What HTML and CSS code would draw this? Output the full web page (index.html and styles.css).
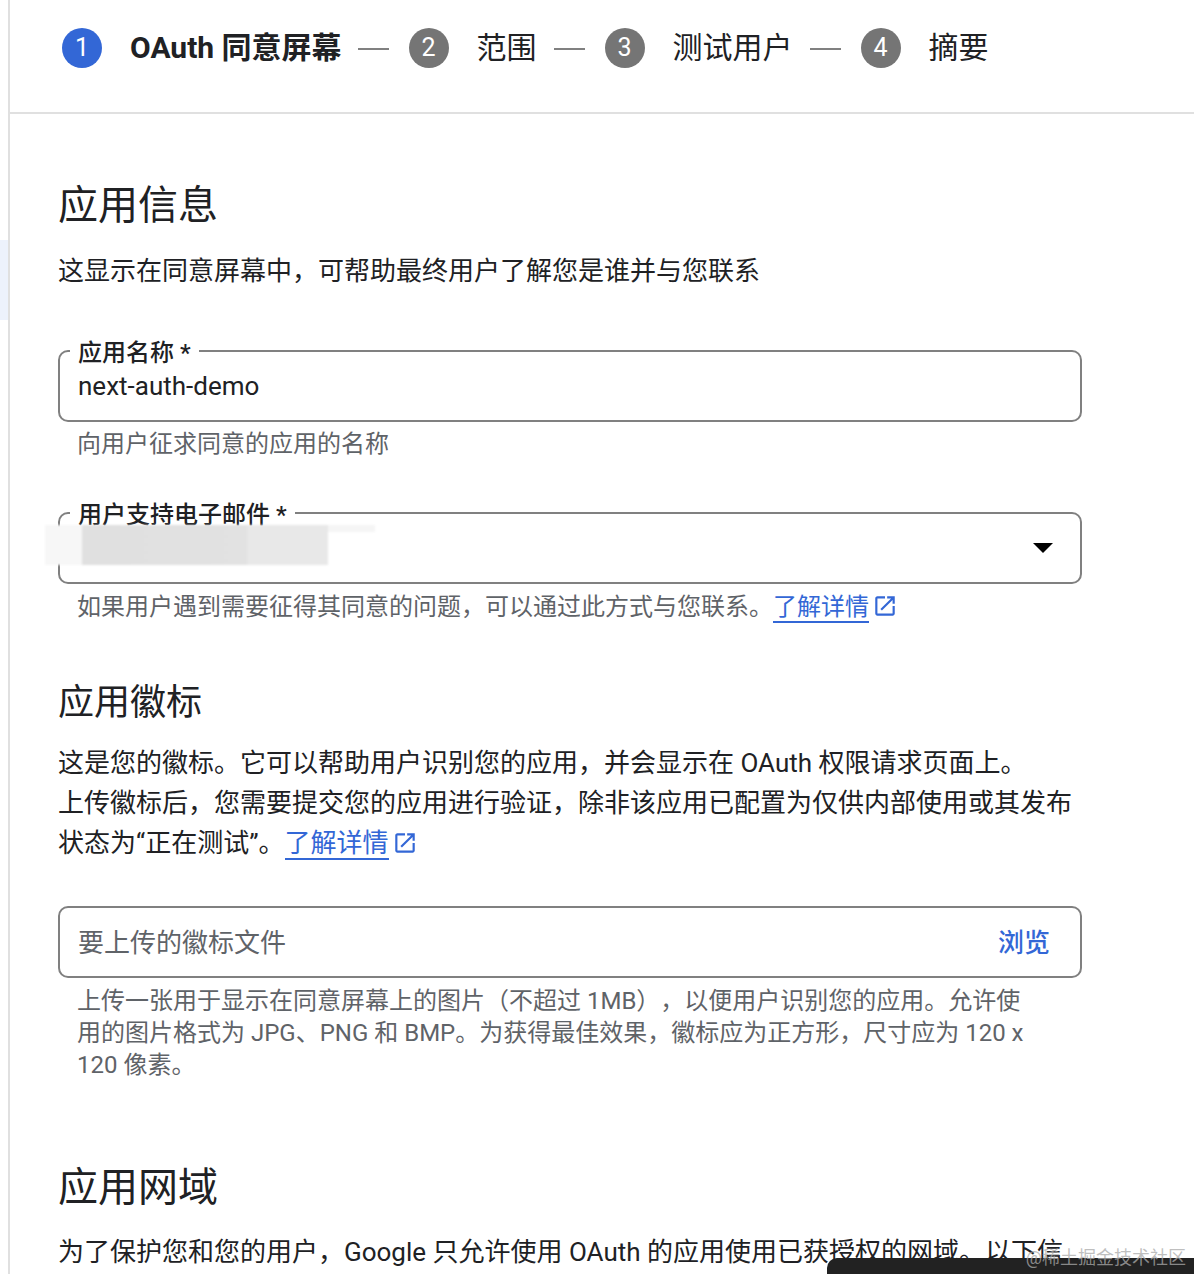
FILE: index.html
```html
<!DOCTYPE html>
<html lang="zh-CN">
<head>
    <meta charset="UTF-8">
    <title>OAuth 同意屏幕</title>
    <link rel="stylesheet" href="styles.css">
</head>
<body>
    <div class="page">
        <div class="rail"><div class="rail-active"></div></div>

        <div class="main">
            <div class="stepper">
                <div class="step-num active">1</div>
                <div class="step-name current">OAuth 同意屏幕</div>
                <div class="step-line"></div>
                <div class="step-num">2</div>
                <div class="step-name">范围</div>
                <div class="step-line"></div>
                <div class="step-num">3</div>
                <div class="step-name">测试用户</div>
                <div class="step-line"></div>
                <div class="step-num">4</div>
                <div class="step-name">摘要</div>
            </div>

            <div class="content">
                <h1>应用信息</h1>
                <p class="desc">这显示在同意屏幕中，可帮助最终用户了解您是谁并与您联系</p>

                <div class="field first-field">
                    <span class="field-label">应用名称 *</span>
                    <span class="field-value">next-auth-demo</span>
                </div>
                <div class="hint">向用户征求同意的应用的名称</div>

                <div class="field second-field">
                    <span class="field-label">用户支持电子邮件 *</span>
                    <div class="redacted"></div>
                    <div class="arrow"></div>
                </div>
                <div class="hint email-hint">如果用户遇到需要征得其同意的问题，可以通过此方式与您联系。<a class="link" href="#">了解详情</a><svg class="ext-icon" viewBox="0 0 24 24"><path d="M19 19H5V5h7V3H5c-1.11 0-2 .9-2 2v14c0 1.1.89 2 2 2h14c1.1 0 2-.9 2-2v-7h-2v7zM14 3v2h3.59l-9.83 9.83 1.41 1.41L19 6.41V10h2V3h-7z"/></svg></div>

                <h2>应用徽标</h2>
                <p class="para">这是您的徽标。它可以帮助用户识别您的应用，并会显示在 OAuth 权限请求页面上。<br>上传徽标后，您需要提交您的应用进行验证，除非该应用已配置为仅供内部使用或其发布<br>状态为“正在测试”。<a class="link" href="#">了解详情</a><svg class="ext-icon" viewBox="0 0 24 24"><path d="M19 19H5V5h7V3H5c-1.11 0-2 .9-2 2v14c0 1.1.89 2 2 2h14c1.1 0 2-.9 2-2v-7h-2v7zM14 3v2h3.59l-9.83 9.83 1.41 1.41L19 6.41V10h2V3h-7z"/></svg></p>

                <div class="field upload-field">
                    <span class="placeholder">要上传的徽标文件</span>
                    <span class="browse">浏览</span>
                </div>
                <div class="hint multi">上传一张用于显示在同意屏幕上的图片（不超过 1MB），以便用户识别您的应用。允许使<br>用的图片格式为 JPG、PNG 和 BMP。为获得最佳效果，徽标应为正方形，尺寸应为 120 x<br>120 像素。</div>

                <h1 class="domain-title">应用网域</h1>
                <p class="desc domain-desc">为了保护您和您的用户，Google 只允许使用 OAuth 的应用使用已获授权的网域。以下信</p>
            </div>
        </div>
    </div>

    <div class="dark-bar"></div>
    <div class="watermark">@稀土掘金技术社区</div>
</body>
</html>
```

FILE: styles.css
```css
* {
    margin: 0;
    padding: 0;
    box-sizing: border-box;
}

html, body {
    height: 1274px;
    overflow: hidden;
}

body {
    font-family: Roboto, 'Noto Sans CJK SC', sans-serif;
    background: white;
    color: #202124;
    position: relative;
}

.page {
    display: flex;
    height: 100%;
}

.rail {
    width: 8px;
    flex-shrink: 0;
    padding-top: 240px;
}

.rail-active {
    height: 80px;
    background: #edf2fc;
}

.main {
    flex: 1;
    border-left: 2px solid #e0e0e0;
}

.stepper {
    height: 114px;
    border-bottom: 2px solid #e0e0e0;
    display: flex;
    align-items: flex-start;
    padding: 28px 0 0 52px;
}

.step-num {
    width: 40px;
    height: 40px;
    border-radius: 50%;
    background: #757575;
    color: white;
    font-size: 25px;
    line-height: 40px;
    text-align: center;
    margin-right: 28px;
}

.step-num.active {
    background: #3367d6;
}

.step-name {
    font-size: 30px;
    line-height: 40px;
    white-space: nowrap;
}

.step-name.current {
    font-weight: 700;
    margin-right: -1px;
}

.step-line {
    width: 31px;
    height: 2px;
    background: #808080;
    margin: 20px 20px 0 17px;
}

.content {
    padding-left: 48px;
    width: 1072px;
}

h1 {
    font-size: 40px;
    font-weight: 400;
    line-height: 56px;
    margin-top: 64px;
}

h2 {
    font-size: 36px;
    font-weight: 400;
    line-height: 50px;
    margin-top: 55px;
}

.desc {
    font-size: 26px;
    line-height: 40px;
    margin-top: 17px;
    white-space: nowrap;
}

.domain-desc {
    margin-top: 16px;
}

.para {
    font-size: 26px;
    line-height: 40px;
    margin-top: 15px;
    white-space: nowrap;
}

.field {
    position: relative;
    height: 72px;
    border: 2px solid #808080;
    border-radius: 10px;
    display: flex;
    align-items: center;
    padding: 0 18px;
}

.first-field {
    margin-top: 59px;
}

.second-field {
    margin-top: 52px;
}

.upload-field {
    margin-top: 43px;
    justify-content: space-between;
}

.field-label {
    position: absolute;
    left: 10px;
    top: -14px;
    background: white;
    padding: 0 8px;
    font-size: 24px;
    font-weight: 500;
    line-height: 30px;
}

.field-value {
    font-size: 26px;
}

.placeholder {
    font-size: 26px;
    color: #5f6368;
    margin-bottom: 4px;
}

.browse {
    font-size: 26px;
    font-weight: 500;
    color: #3367d6;
    margin: 0 12px 4px 0;
}

.redacted {
    position: absolute;
    left: -15px;
    top: 11px;
    width: 283px;
    height: 40px;
    background: linear-gradient(90deg, #f7f7f7 0, #f7f7f7 13%, #e0e0e0 13%, #e2e2e2 71%, #e8e8e8 72%, #e8e8e8 100%);
    filter: blur(1px);
}

.redacted::after {
    content: "";
    position: absolute;
    left: 100%;
    top: 0;
    width: 47px;
    height: 7px;
    background: #f5f5f5;
}

.arrow {
    position: absolute;
    right: 27px;
    top: 29px;
    border-left: 10px solid transparent;
    border-right: 10px solid transparent;
    border-top: 10px solid black;
}

.hint {
    font-size: 24px;
    line-height: 32px;
    color: #5f6368;
    padding: 6px 0 0 19px;
    white-space: nowrap;
}

.email-hint {
    padding-top: 7px;
}

.hint.multi {
    padding-top: 7px;
    text-spacing-trim: space-all;
}

.link {
    color: #3367d6;
    text-decoration: none;
    border-bottom: 2px solid #3367d6;
}

.ext-icon {
    width: 26px;
    height: 26px;
    fill: #3367d6;
    vertical-align: -4px;
    margin-left: 3px;
}

.domain-title {
    margin-top: 79px;
}

.dark-bar {
    position: absolute;
    left: 827px;
    right: 0;
    top: 1258px;
    height: 16px;
    background: #222;
    border-top-left-radius: 10px;
}

.watermark {
    position: absolute;
    right: 8px;
    top: 1246px;
    font-size: 18px;
    line-height: 24px;
    color: rgba(170, 170, 170, 0.75);
}
```
